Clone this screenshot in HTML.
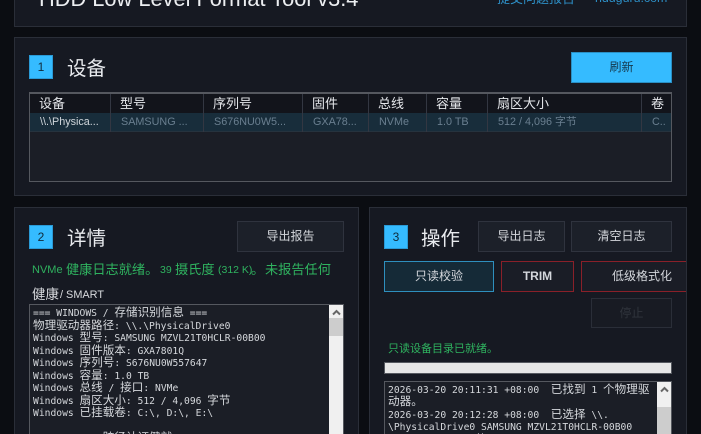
<!DOCTYPE html>
<html><head><meta charset="utf-8">
<style>
html,body{margin:0;padding:0;width:701px;height:434px;overflow:hidden;background:#0b0d12;}
body{position:relative;font-family:"Liberation Sans","Noto Sans CJK SC",sans-serif;color:#e6e8ec;}
div{position:absolute;box-sizing:border-box;white-space:nowrap;}
.panel{background:#161922;border:1px solid #2a2e38;}
.badge{width:24px;height:24px;background:#35bbff;color:#0f2a3a;font-size:12px;line-height:23px;text-align:center;border:1px solid #2a9ad6;}
.title{font-size:19.5px;line-height:26px;color:#e8eaee;}
.btn{background:#1c2029;border:1px solid #2f333e;font-size:12px;color:#d4d7dc;text-align:center;line-height:29px;}
.th{height:19px;font-size:13px;line-height:20px;color:#e4e6ea;padding-left:9px;}
.sep{width:1px;background:#333742;}
.td{height:18px;font-size:10.8px;line-height:18px;color:#6a7f90;padding-left:10px;overflow:hidden;}
.mono{font-family:"DejaVu Sans Mono","Noto Sans CJK SC",monospace;font-size:9.67px;line-height:12.5px;color:#d5d8dc;white-space:pre;}
.mono b{font-weight:400;font-family:"Noto Sans CJK SC",sans-serif;font-size:11.6px;line-height:0;}
.sb{background:#f0f0f0;}
.thumb{background:#cdcdcd;left:0;width:100%;}
.g{top:261px;line-height:18px;color:#2fb25f;font-size:13.2px;}
.gl{font-size:10.5px;}
svg{position:absolute;}
</style></head>
<body>
<!-- top panel -->
<div class="panel" style="left:14px;top:0;width:673px;height:27px;border-top:none;overflow:hidden;">
  <div style="left:24px;top:-14px;font-size:21.8px;line-height:26px;color:#eceef1;">HDD Low Level Format Tool v3.4</div>
  <div style="left:482px;top:-10px;font-size:13px;line-height:18px;color:#2d8fc6;">提交问题报告</div>
  <div style="left:580px;top:-11px;font-size:12.4px;line-height:18px;color:#2d8fc6;">hddguru.com</div>
</div>

<!-- panel 1 -->
<div class="panel" style="left:14px;top:37px;width:673px;height:159px;"></div>
<div class="badge" style="left:29px;top:55px;">1</div>
<div class="title" style="left:67px;top:56px;">设备</div>
<div class="btn" style="left:571px;top:52px;width:101px;height:31px;background:#35bbff;border-color:#2a8fc4;color:#15384c;">刷新</div>

<div style="left:29px;top:92px;width:643px;height:90px;background:#1b1e26;border:1px solid #55585f;border-top-width:2px;">
  <div style="left:0;top:0;width:641px;height:19px;background:#12141b;"></div>
  <div style="left:0;top:19px;width:641px;height:19px;background:#182d3b;border-bottom:1px solid #26333e;"></div>
  <div class="sep" style="left:80px;top:0;height:38px;"></div>
  <div class="sep" style="left:173px;top:0;height:38px;"></div>
  <div class="sep" style="left:272px;top:0;height:38px;"></div>
  <div class="sep" style="left:338px;top:0;height:38px;"></div>
  <div class="sep" style="left:396px;top:0;height:38px;"></div>
  <div class="sep" style="left:457px;top:0;height:38px;"></div>
  <div class="sep" style="left:611px;top:0;height:38px;"></div>
  <div class="th" style="left:0;top:0;">设备</div>
  <div class="th" style="left:81px;top:0;">型号</div>
  <div class="th" style="left:174px;top:0;">序列号</div>
  <div class="th" style="left:273px;top:0;">固件</div>
  <div class="th" style="left:339px;top:0;">总线</div>
  <div class="th" style="left:397px;top:0;">容量</div>
  <div class="th" style="left:458px;top:0;">扇区大小</div>
  <div class="th" style="left:612px;top:0;">卷</div>
  <div class="td" style="left:0;top:19px;color:#cfd5da;">\\.\Physica...</div>
  <div class="td" style="left:81px;top:19px;">SAMSUNG ...</div>
  <div class="td" style="left:174px;top:19px;">S676NU0W5...</div>
  <div class="td" style="left:273px;top:19px;">GXA78...</div>
  <div class="td" style="left:339px;top:19px;">NVMe</div>
  <div class="td" style="left:397px;top:19px;">1.0 TB</div>
  <div class="td" style="left:458px;top:19px;">512 / 4,096 字节</div>
  <div class="td" style="left:612px;top:19px;">C..</div>
</div>

<!-- panel 2 -->
<div class="panel" style="left:14px;top:207px;width:345px;height:227px;border-bottom:none;"></div>
<div class="badge" style="left:29px;top:225px;">2</div>
<div class="title" style="left:67px;top:226px;">详情</div>
<div class="btn" style="left:237px;top:221px;width:107px;height:31px;">导出报告</div>
<div class="g gl" style="left:32px;font-size:11px;">NVMe</div>
<div class="g" style="left:66px;">健康日志就绪。</div>
<div class="g gl" style="left:160px;">39</div>
<div class="g" style="left:175px;">摄氏度</div>
<div class="g gl" style="left:218px;">(312 K)</div>
<div class="g" style="left:251px;">。</div>
<div class="g" style="left:265px;">未报告任何</div>
<div style="left:32px;top:286px;font-size:13.5px;line-height:18px;color:#d8dade;">健康</div>
<div style="left:60px;top:286px;font-size:10.9px;line-height:18px;color:#d8dade;">/ SMART</div>
<div style="left:29px;top:304px;width:315px;height:130px;background:#1b1e26;border:1px solid #55585f;border-bottom:none;overflow:hidden;">
  <div class="mono" style="left:3px;top:3px;">=== WINDOWS / <b>存储识别信息</b> ===
<b>物理驱动器路径</b>: \\.\PhysicalDrive0
Windows <b>型号</b>: SAMSUNG MZVL21T0HCLR-00B00
Windows <b>固件版本</b>: GXA7801Q
Windows <b>序列号</b>: S676NU0W557647
Windows <b>容量</b>: 1.0 TB
Windows <b>总线</b> / <b>接口</b>: NVMe
Windows <b>扇区大小</b>: 512 / 4,096 <b>字节</b>
Windows <b>已挂载卷</b>: C:\, D:\, E:\

            <b>跨径认证健就</b></div>
  <div class="sb" style="right:-1px;top:-1px;width:15px;height:131px;">
    <svg style="left:3px;top:5px;" width="9" height="7" viewBox="0 0 9 7"><path d="M1 5.5 L4.5 2 L8 5.5" fill="none" stroke="#666" stroke-width="2"/></svg>
    <div class="thumb" style="top:14px;height:18px;"></div>
  </div>
</div>

<!-- panel 3 -->
<div class="panel" style="left:369px;top:207px;width:318px;height:227px;border-bottom:none;overflow:hidden;">
  <div class="btn" style="left:211px;top:53px;width:130px;height:31px;border-color:#8a2029;background:#1a1d26;"></div>
  <div style="left:242px;top:59px;font-size:12px;line-height:18px;color:#d4d7dc;">低级格式化</div>
</div>
<div class="badge" style="left:384px;top:225px;">3</div>
<div class="title" style="left:421px;top:226px;">操作</div>
<div class="btn" style="left:478px;top:221px;width:87px;height:31px;">导出日志</div>
<div class="btn" style="left:571px;top:221px;width:101px;height:31px;">清空日志</div>
<div class="btn" style="left:384px;top:261px;width:110px;height:31px;background:#152a37;border-color:#2e8fbe;">只读校验</div>
<div class="btn" style="left:501px;top:261px;width:73px;height:31px;background:#1a1d26;border-color:#8a2029;font-weight:700;">TRIM</div>
<div class="btn" style="left:591px;top:298px;width:81px;height:30px;background:#181b23;border-color:#2a2e38;color:#30343c;">停止</div>
<div style="left:388px;top:340px;font-size:11px;line-height:18px;color:#2fb25f;">只读设备目录已就绪。</div>
<div style="left:384px;top:362px;width:288px;height:12px;background:#e6e6e6;border:1px solid #55585f;"></div>
<div style="left:384px;top:381px;width:288px;height:53px;background:#1b1e26;border:1px solid #55585f;border-bottom:none;overflow:hidden;">
  <div class="mono" style="left:3px;top:2.5px;">2026-03-20 20:11:31 +08:00  <b>已找到</b> 1 <b>个物理驱</b>
<b>动器。</b>
2026-03-20 20:12:28 +08:00  <b>已选择</b> \\.
\PhysicalDrive0 SAMSUNG MZVL21T0HCLR-00B00
               <b>的</b></div>
  <div class="sb" style="right:-1px;top:-1px;width:15px;height:54px;">
    <svg style="left:3px;top:5px;" width="9" height="7" viewBox="0 0 9 7"><path d="M1 5.5 L4.5 2 L8 5.5" fill="none" stroke="#666" stroke-width="2"/></svg>
    <div class="thumb" style="top:26px;height:28px;"></div>
  </div>
</div>
</body></html>
